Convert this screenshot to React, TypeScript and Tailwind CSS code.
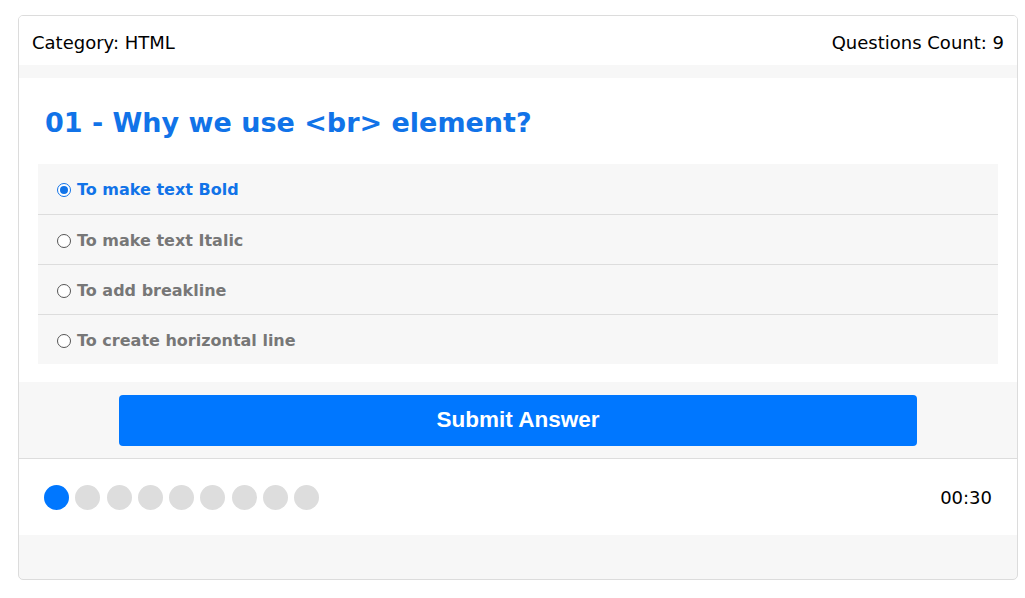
import React from "react";

const answers = [
  "To make text Bold",
  "To make text Italic",
  "To add breakline",
  "To create horizontal line",
];

export default function App() {
  return (
    <div className="w-[1025px] h-[598px] bg-white pt-[15px] pl-[18px]" style={{ fontFamily: '"DejaVu Sans", Verdana, sans-serif' }}>
      <div className="w-[1000px] h-[565px] border border-[#dcdcdc] rounded-[5px] bg-[#f7f7f7] flex flex-col overflow-hidden">
        <div className="h-[49px] bg-white flex items-center justify-between px-[13px] text-[18px] text-black shrink-0">
          <span className="pt-[3px]">Category: HTML</span>
          <span className="pt-[3px]">Questions Count: 9</span>
        </div>
        <div className="h-[13px] shrink-0" />
        <div className="bg-white pt-[27px] pb-[18px] px-[19px] shrink-0">
          <h1 className="text-[27px] font-bold text-[#1173e8] leading-[36px] px-[7px] mb-[23px]">01 - Why we use &lt;br&gt; element?</h1>
          <div className="bg-[#f7f7f7] flex flex-col">
            {answers.map((a, i) => (
              <label key={a} className={`h-[50px] flex items-center pl-[19px] gap-[6px] pt-[2px] ${i > 0 ? "border-t border-[#dddddd]" : ""}`}>
                <span className={`w-[14px] h-[14px] rounded-full flex items-center justify-center bg-white ${i === 0 ? "border-[1.5px] border-[#1173e8]" : "border border-[#555]"}`}>
                  {i === 0 && <span className="w-[8px] h-[8px] rounded-full bg-[#1173e8]" />}
                </span>
                <span className={`text-[16px] font-bold ${i === 0 ? "text-[#1173e8]" : "text-[#777777]"}`}>{a}</span>
              </label>
            ))}
          </div>
        </div>
        <div className="h-[77px] flex items-center justify-center border-b border-[#dddddd] shrink-0">
          <button className="w-[798px] h-[51px] rounded-[4px] bg-[#0077ff] text-white text-[22.5px] font-bold" style={{ fontFamily: '"Liberation Sans", Arial, sans-serif' }}>
            Submit Answer
          </button>
        </div>
        <div className="h-[76px] bg-white flex items-center justify-between pl-[25px] pr-[25px] shrink-0">
          <div className="flex gap-[6.25px]">
            {Array.from({ length: 9 }).map((_, i) => (
              <span key={i} className={`w-[25px] h-[25px] rounded-full ${i === 0 ? "bg-[#0077ff]" : "bg-[#dddddd]"}`} />
            ))}
          </div>
          <span className="text-[18px] text-black">00:30</span>
        </div>
        <div className="flex-1" />
      </div>
    </div>
  );
}
